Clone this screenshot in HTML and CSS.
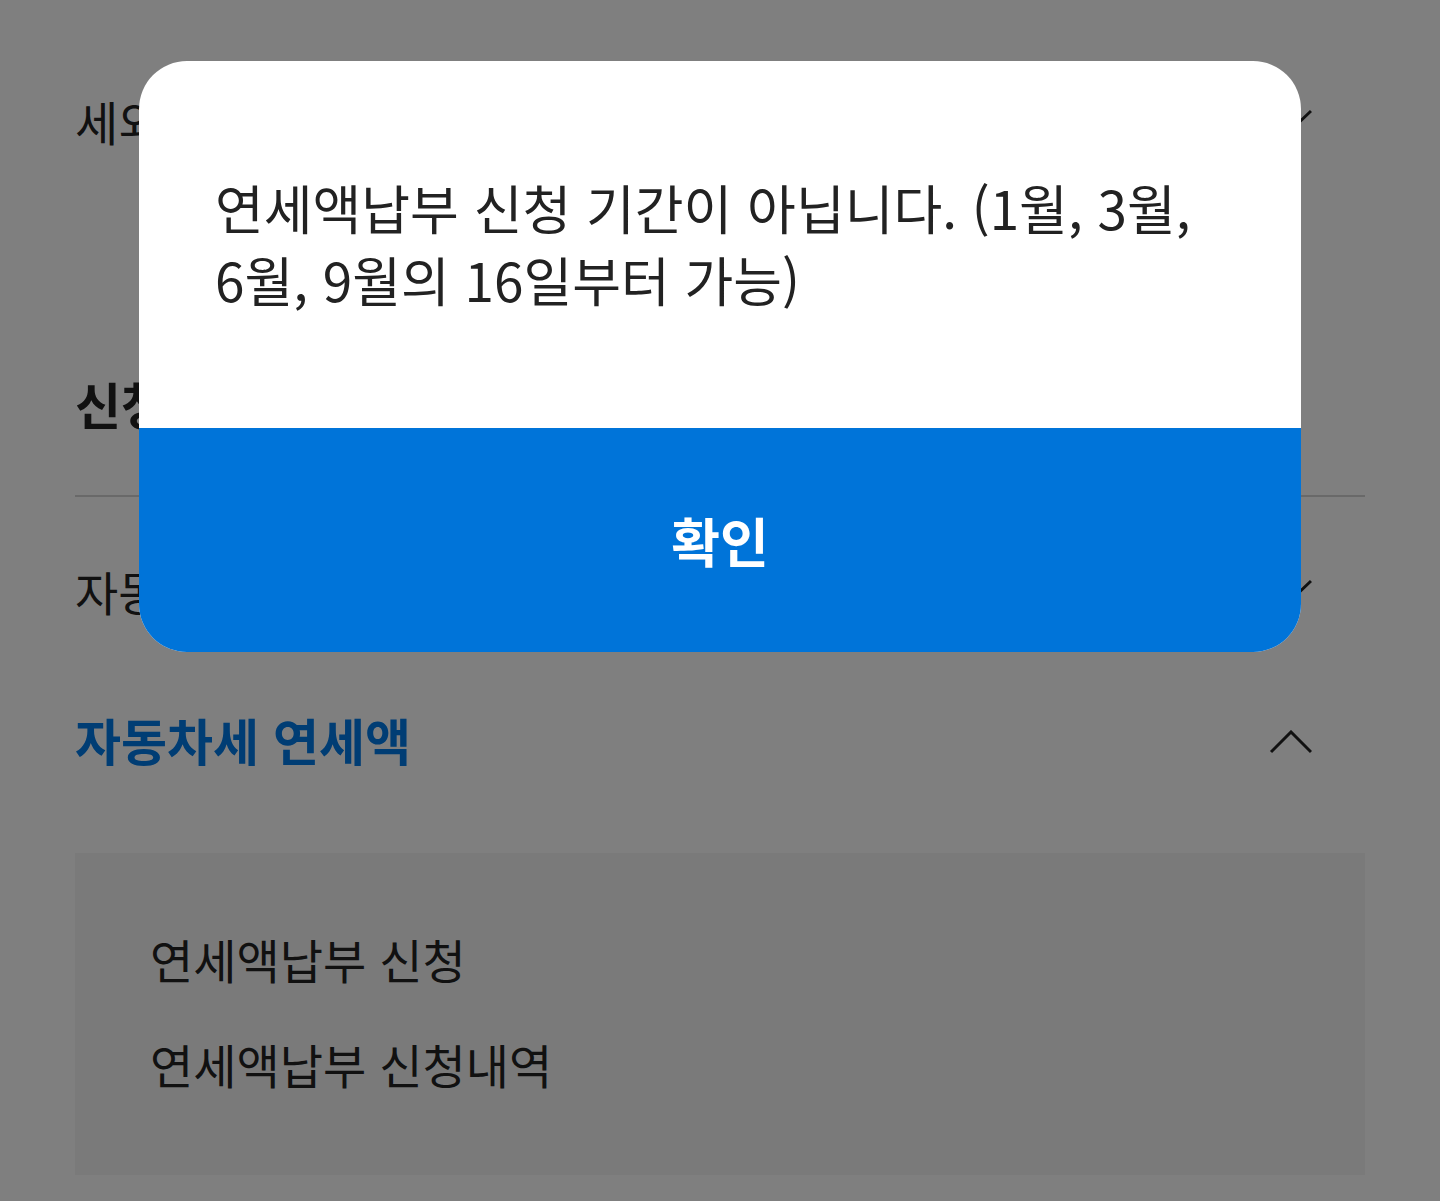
FILE: index.html
```html
<!DOCTYPE html>
<html lang="ko">

<head>
    <meta charset="UTF-8">
    <meta name="viewport" content="width=device-width, initial-scale=1.0">
    <title>자동차세 연세액</title>
    <link rel="stylesheet" href="styles.css">
</head>

<body>
    <div class="page">
        <div class="menu-row">
            <span>세외수입</span>
            <svg class="chevron" viewBox="0 0 44 24"><polyline points="3,3 23,22 43,3" /></svg>
        </div>

        <h2 class="section-title">신청하기</h2>

        <div class="menu-row second">
            <span>자동차세</span>
            <svg class="chevron" viewBox="0 0 44 24"><polyline points="3,3 23,22 43,3" /></svg>
        </div>

        <!-- 펼쳐진 메뉴 -->
        <div class="accordion-head">
            <span>자동차세 연세액</span>
            <svg class="chevron up" viewBox="0 0 44 24"><polyline points="3,22 23,2 43,22" /></svg>
        </div>
        <ul class="accordion-body">
            <li>연세액납부 신청</li>
            <li>연세액납부 신청내역</li>
        </ul>
    </div>

    <!-- 알림 팝업 -->
    <div class="dim">
        <div class="alert">
            <p class="alert-msg">연세액납부 신청 기간이 아닙니다. (1월, 3월, 6월, 9월의 16일부터 가능)</p>
            <button class="alert-btn" type="button">확인</button>
        </div>
    </div>
</body>

</html>
```

FILE: styles.css
```css
body {
    margin: 0;
    font-family: "Noto Sans CJK KR", "Noto Sans", sans-serif;
    color: #222;
    background: #fff;
    overflow: hidden;
}

.page {
    padding: 0 75px;
}

.menu-row {
    display: flex;
    align-items: center;
    justify-content: space-between;
    height: 240px;
    font-size: 47px;
}

.menu-row.second {
    height: 186px;
}

.chevron {
    width: 44px;
    height: 24px;
    margin-right: 53px;
    fill: none;
    stroke: #222;
    stroke-width: 3;
}

.section-title {
    margin: 0;
    padding: 131px 0 60px;
    font-size: 50px;
    line-height: 64px;
    font-weight: 700;
    border-bottom: 2px solid #d2d2d2;
}

.accordion-head {
    display: flex;
    align-items: center;
    justify-content: space-between;
    height: 112px;
    font-size: 50px;
    font-weight: 700;
    color: #007ae8;
}

.chevron.up {
    margin-top: 6px;
}

.accordion-body {
    list-style: none;
    margin: 58px 0 0;
    padding: 76px 75px 81px;
    background: #f4f4f4;
    display: flex;
    flex-direction: column;
    gap: 45px;
}

.accordion-body li {
    font-size: 47px;
    line-height: 60px;
}

/* 팝업 */
.dim {
    position: fixed;
    inset: 0;
    background: rgba(0, 0, 0, 0.5);
    z-index: 100;
}

.alert {
    width: 1162px;
    margin: 61px auto 0;
    background: #fff;
    border-radius: 48px;
    overflow: hidden;
}

.alert-msg {
    margin: 0;
    height: 257px;
    padding: 110px 76px 0;
    font-size: 53px;
    line-height: 72px;
    color: #222;
}

.alert-btn {
    display: block;
    width: 100%;
    height: 224px;
    border: 0;
    background: #0074d9;
    color: #fff;
    font-family: inherit;
    font-size: 53px;
    font-weight: 700;
}
```
